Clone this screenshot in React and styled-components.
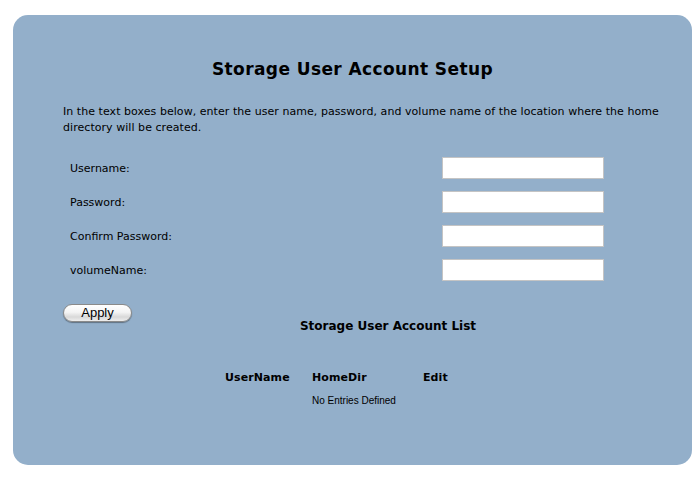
import React from "react";
import styled, { createGlobalStyle } from "styled-components";

const GlobalStyle = createGlobalStyle`
  body {
    margin: 0;
    background: #ffffff;
    font-family: "DejaVu Sans", Verdana, sans-serif;
    color: #000;
  }
`;

const Panel = styled.div`
  box-sizing: border-box;
  margin: 15px 0 0 13px;
  width: 679px;
  height: 450px;
  background: #93afca;
  border-radius: 15px;
  padding: 44px 48px 0 50px;
`;

const Title = styled.h1`
  margin: 0 0 0 -50px;
  width: 679px;
  text-align: center;
  font-size: 17px;
  line-height: 20px;
  font-weight: bold;
  letter-spacing: 0.4px;
`;

const Intro = styled.p`
  margin: 25px 0 0 0;
  width: 620px;
  font-size: 11px;
  line-height: 16px;
  letter-spacing: 0.05px;
`;

const Form = styled.div`
  display: grid;
  grid-template-columns: 372px 162px;
  row-gap: 12px;
  margin: 21px 0 0 7px;
`;

const Label = styled.label`
  box-sizing: border-box;
  height: 22px;
  font-size: 11px;
  line-height: 20px;
  padding-top: 2px;
`;

const TextBox = styled.input`
  box-sizing: border-box;
  width: 162px;
  height: 22px;
  border: 1px solid #c4c4c4;
  background: #fff;
  padding: 2px 4px;
  margin: 0;
  font-size: 11px;
  &:focus {
    outline: none;
  }
`;

const Bottom = styled.div`
  display: flex;
  align-items: flex-start;
  margin-top: 23px;
`;

const ApplyButton = styled.button`
  box-sizing: border-box;
  width: 69px;
  height: 18px;
  margin: 0;
  padding: 0 0 1px;
  border: 1px solid #8a8a8a;
  border-radius: 9px;
  background: linear-gradient(#ffffff 0%, #f4f4f4 45%, #d8d8d8 75%, #eeeeee 100%);
  box-shadow: 0 1px 1px rgba(0, 0, 0, 0.35);
  font-family: "Liberation Sans", Arial, sans-serif;
  font-size: 13px;
  line-height: 15px;
  color: #000;
`;

const ListArea = styled.div`
  flex: 1;
`;

const ListTitle = styled.h2`
  margin: 14px 0 0 0;
  text-align: center;
  font-size: 12px;
  line-height: 16px;
  font-weight: bold;
`;

const EntryTable = styled.div`
  display: grid;
  grid-template-columns: 87px 111px 60px;
  margin: 36px 0 0 93px;
`;

const HeadCell = styled.div`
  font-size: 11px;
  font-weight: bold;
  line-height: 16px;
  letter-spacing: 0.1px;
`;

const EmptyCell = styled.div`
  grid-column: 2 / 4;
  margin-top: 9px;
  font-family: "Liberation Sans", Arial, sans-serif;
  font-size: 10px;
  line-height: 12px;
`;

const fields = [
  { label: "Username:", type: "text" },
  { label: "Password:", type: "password" },
  { label: "Confirm Password:", type: "password" },
  { label: "volumeName:", type: "text" },
];

export default function App() {
  return (
    <>
      <GlobalStyle />
      <Panel>
        <Title>Storage User Account Setup</Title>
        <Intro>
          In the text boxes below, enter the user name, password, and volume
          name of the location where the home directory will be created.
        </Intro>
        <Form>
          {fields.map((f) => (
            <React.Fragment key={f.label}>
              <Label>{f.label}</Label>
              <TextBox type={f.type} />
            </React.Fragment>
          ))}
        </Form>
        <Bottom>
          <ApplyButton>Apply</ApplyButton>
          <ListArea>
            <ListTitle>Storage User Account List</ListTitle>
            <EntryTable>
              <HeadCell>UserName</HeadCell>
              <HeadCell>HomeDir</HeadCell>
              <HeadCell>Edit</HeadCell>
              <EmptyCell>No Entries Defined</EmptyCell>
            </EntryTable>
          </ListArea>
        </Bottom>
      </Panel>
    </>
  );
}
